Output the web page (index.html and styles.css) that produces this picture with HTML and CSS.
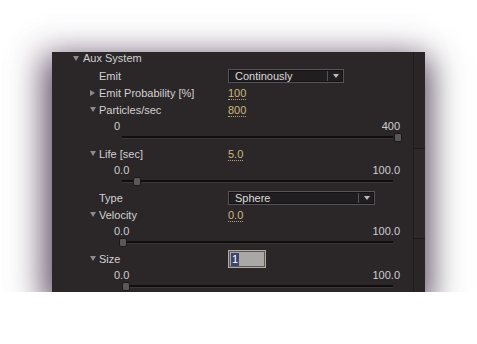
FILE: index.html
```html
<!DOCTYPE html>
<html lang="en">
<head>
  <meta charset="UTF-8">
  <meta name="viewport" content="width=device-width, initial-scale=1.0">
  <title>Aux System</title>
  <link rel="stylesheet" href="styles.css">
</head>
<body>
  <div class="panel">
    <div class="props">
      <div class="row top">
        <div class="name lvl1"><span class="twisty down"></span>Aux System</div>
      </div>

      <div class="row">
        <div class="name lvl2"><span class="twisty"></span>Emit</div>
        <div class="dropdown emit"><span class="dd-text">Continously</span><span class="dd-btn"><span class="dd-arrow"></span></span></div>
      </div>

      <div class="row">
        <div class="name lvl2"><span class="twisty"><span class="tri-right"></span></span>Emit Probability [%]</div>
        <span class="value">100</span>
      </div>

      <div class="row">
        <div class="name lvl2"><span class="twisty down"></span>Particles/sec</div>
        <span class="value">800</span>
      </div>
      <div class="scale"><span>0</span><span>400</span></div>
      <div class="slider"><div class="track"></div><div class="thumb" style="left:272px"></div></div>

      <div class="row">
        <div class="name lvl2"><span class="twisty down"></span>Life [sec]</div>
        <span class="value">5.0</span>
      </div>
      <div class="scale"><span>0.0</span><span>100.0</span></div>
      <div class="slider"><div class="track"></div><div class="thumb" style="left:11px"></div></div>

      <div class="row">
        <div class="name lvl2"><span class="twisty"></span>Type</div>
        <div class="dropdown type"><span class="dd-text">Sphere</span><span class="dd-btn"><span class="dd-arrow"></span></span></div>
      </div>

      <div class="row">
        <div class="name lvl2"><span class="twisty down"></span>Velocity</div>
        <span class="value">0.0</span>
      </div>
      <div class="scale"><span>0.0</span><span>100.0</span></div>
      <div class="slider"><div class="track"></div><div class="thumb" style="left:-3px"></div></div>

      <div class="row">
        <div class="name lvl2"><span class="twisty down"></span>Size</div>
        <div class="field"><span class="sel">1</span></div>
      </div>
      <div class="scale"><span>0.0</span><span>100.0</span></div>
      <div class="slider"><div class="track"></div><div class="thumb" style="left:0px"></div></div>
    </div>

    <div class="scroll">
      <div class="scroll-thumb"></div>
    </div>
  </div>
</body>
</html>
```

FILE: styles.css
```css
body {
  margin: 0;
  background: #fff;
  font-family: 'Liberation Sans', Arial, sans-serif;
  font-size: 11px;
  color: #d2d0d1;
}
.panel {
  margin: 52px 0 0 52px;
  width: 373px;
  height: 240px;
  background: #2b2729;
  display: flex;
  overflow: hidden;
  box-shadow: 0 12px 30px 6px rgba(70, 58, 78, 0.85), -12px 0 30px 4px rgba(150, 110, 150, 0.25);
}
.props {
  flex: 1;
}
.scroll {
  width: 11px;
  border-left: 1px solid #1d1a1c;
  background: #2a2628;
  padding-top: 96px;
}
.scroll-thumb {
  height: 89px;
  border-top: 1px solid #1d1a1c;
  border-bottom: 1px solid #1d1a1c;
  background: #2d292b;
}
.row {
  height: 17px;
  display: flex;
  align-items: center;
}
.row.top {
  height: 15px;
  align-items: flex-start;
  line-height: 12px;
}
.name {
  width: 176px;
  display: flex;
  align-items: center;
  box-sizing: border-box;
  white-space: nowrap;
}
.lvl1 {
  padding-left: 21px;
}
.lvl1 .twisty {
  width: 10px;
}
.lvl2 {
  padding-left: 38px;
}
.twisty {
  width: 9px;
  height: 8px;
  display: inline-flex;
  align-items: center;
}
.twisty.down::before {
  content: "";
  border-left: 3px solid transparent;
  border-right: 3px solid transparent;
  border-top: 5px solid #8e8a8c;
}
.tri-right {
  border-top: 3px solid transparent;
  border-bottom: 3px solid transparent;
  border-left: 5px solid #8e8a8c;
}
.value {
  color: #cbb97c;
  line-height: 12px;
  border-bottom: 1px dotted #b7a66a;
  margin-top: 2px;
}
.dropdown {
  height: 12px;
  border: 1px solid #57535a;
  background: #211e20;
  display: flex;
  align-items: center;
  box-shadow: inset 0 0 0 1px #141214;
}
.dropdown.emit {
  width: 114px;
}
.dropdown.type {
  width: 145px;
}
.dd-text {
  flex: 1;
  padding-left: 6px;
  color: #dcdadb;
}
.dd-btn {
  width: 15px;
  height: 10px;
  border-left: 1px solid #55525a;
  display: flex;
  align-items: center;
  justify-content: center;
}
.dd-arrow {
  border-left: 3px solid transparent;
  border-right: 3px solid transparent;
  border-top: 4px solid #bdbbbc;
}
.field {
  width: 34px;
  height: 16px;
  border: 1px solid #b3aba0;
  background: #a9a7a8;
  box-shadow: inset 0 0 0 1px #5c585a;
  display: flex;
  align-items: center;
  padding-left: 2px;
  box-sizing: content-box;
  margin-top: 1px;
}
.sel {
  background: #3c4570;
  color: #fff;
  padding: 0 1px;
  line-height: 13px;
}
.scale {
  height: 16px;
  display: flex;
  align-items: center;
  justify-content: space-between;
  margin: 0 13px 0 62px;
  color: #cfcdce;
}
.slider {
  position: relative;
  height: 11px;
  margin-left: 70px;
  width: 271px;
}
.track {
  position: absolute;
  left: 0;
  right: 0;
  top: 2px;
  height: 2px;
  background: #0f0d0e;
  border-bottom: 1px solid #3b3739;
}
.thumb {
  position: absolute;
  top: -1px;
  width: 6px;
  height: 7px;
  background: #5b5759;
  border: 1px solid #1a1819;
  border-radius: 2px;
}
```
